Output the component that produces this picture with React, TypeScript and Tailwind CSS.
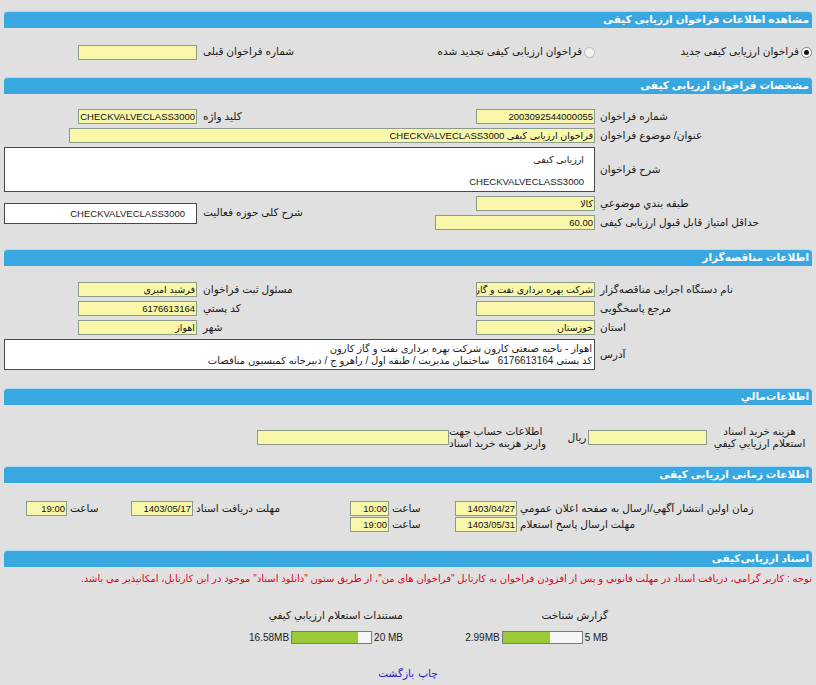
import React from "react";

const Header = ({ title, className = "" }: { title: string; className?: string }) => (
  <div
    className={`mx-[4px] flex h-[17px] items-center rounded-t-[4px] border-t border-[#a9dcf4] bg-[#3aa8e0] px-[3px] text-[10.5px] font-bold text-white ${className}`}
  >
    {title}
  </div>
);

const Field = ({ value = "", className = "" }: { value?: string; className?: string }) => (
  <div
    className={`h-[15px] overflow-hidden whitespace-nowrap border border-[#8c9b88] bg-[#f9f7a9] px-[1px] text-[9.5px] leading-[13px] text-[#111] ${className}`}
  >
    {value}
  </div>
);

const Radio = ({ checked }: { checked?: boolean }) => (
  <span
    className={`inline-flex h-[11px] w-[11px] shrink-0 items-center justify-center rounded-full border ${
      checked ? "border-[#7d7d7d] bg-white" : "border-[#b9b9b9] bg-[#f3f3f3]"
    }`}
  >
    {checked && <span className="h-[5px] w-[5px] rounded-full bg-[#111]" />}
  </span>
);

const Label = ({ text, className = "" }: { text: string; className?: string }) => (
  <div className={`flex items-center justify-end whitespace-nowrap pl-[3px] ${className}`}>{text}</div>
);

const Meter = ({ used, total, max }: { used: number; total: number; max: number }) => {
  const pct = (used / max) * 100;
  return (
    <div className="flex items-center gap-[2px] text-[10px]" dir="ltr">
      <span>{used.toFixed(2)}MB</span>
      <div className="flex h-[13px] w-[81px] border border-[#7b7b7b] bg-[#f6f6f6]">
        <div className="h-full bg-[#9aca38]" style={{ width: `${pct}%` }} />
      </div>
      <span>{total} MB</span>
    </div>
  );
};

export default function App() {
  return (
    <div
      dir="rtl"
      className="h-[685px] w-[816px] overflow-hidden bg-[#e0e0e0] pt-[11px] font-['Liberation_Sans','DejaVu_Sans',sans-serif] text-[10.5px] text-[#1a1a1a]"
    >
      <Header title="مشاهده اطلاعات فراخوان ارزیابی کیفی" />

      {/* نوع فراخوان */}
      <div className="mx-[4px] mt-[16px] grid h-[16px] grid-cols-[215px_297px_100px_196px] items-center">
        <div className="flex items-center gap-[2px]">
          <Radio checked />
          <span>فراخوان ارزیابی کیفی جدید</span>
        </div>
        <div className="flex items-center gap-[2px] pr-[2px]">
          <Radio />
          <span>فراخوان ارزیابی کیفی تجدید شده</span>
        </div>
        <Label text="شماره فراخوان قبلی" />
        <Field className="mr-[3px] w-[119px]" />
      </div>

      <Header title="مشخصات فراخوان ارزیابی کیفی" className="mt-[17px]" />

      <div className="mx-[4px] mt-[15px] grid grid-cols-[215px_297px_100px_196px] grid-rows-[15px_15px_45px_15px_15px] gap-y-[4px]">
        <Label text="شماره فراخوان" />
        <Field value="2003092544000055" className="mr-[2px] w-[119px]" />
        <Label text="کلید واژه" />
        <Field value="CHECKVALVECLASS3000" className="mr-[3px] w-[119px]" />

        <Label text="عنوان/ موضوع فراخوان" />
        <Field value="فراخوان ارزیابی کیفی CHECKVALVECLASS3000" className="col-span-3 mr-[2px] w-[526px]" />

        <Label text="شرح فراخوان" />
        <div className="col-span-3 mr-[2px] border border-[#4a4a4a] bg-white pr-[10px] pt-[6px] text-[9.5px] leading-[11px]">
          <div>ارزیابی کیفی</div>
          <div>&nbsp;</div>
          <div>CHECKVALVECLASS3000</div>
        </div>

        <Label text="طبقه بندي موضوعي" />
        <Field value="کالا" className="mr-[2px] w-[119px]" />
        <Label text="شرح کلی حوزه فعالیت" className="row-span-2" />
        <div className="row-span-2 flex items-center">
          <div className="mr-[3px] h-[21px] flex-1 border border-[#4a4a4a] bg-white pr-[11px] text-[9.5px] leading-[19px]">
            CHECKVALVECLASS3000
          </div>
        </div>

        <Label text="حداقل امتیاز قابل قبول ارزیابی کیفی" />
        <Field value="60.00" className="mr-[2px] w-[160px]" />
      </div>

      <Header title="اطلاعات مناقصه‌گزار" className="mt-[19px]" />

      <div className="mx-[4px] mt-[16px] grid grid-cols-[215px_297px_100px_196px] grid-rows-[15px_15px_15px_31px] gap-y-[4px]">
        <Label text="نام دستگاه اجرایی مناقصه‌گزار" />
        <Field value="شرکت بهره برداری نفت و گاز کارون" className="mr-[2px] w-[119px]" />
        <Label text="مسئول ثبت فراخوان" />
        <Field value="فرشید امیری" className="mr-[3px] w-[119px]" />

        <Label text="مرجع پاسخگویی" />
        <Field className="mr-[2px] w-[119px]" />
        <Label text="کد پستي" />
        <Field value="6176613164" className="mr-[3px] w-[119px]" />

        <Label text="استان" />
        <Field value="خوزستان" className="mr-[2px] w-[119px]" />
        <Label text="شهر" />
        <Field value="اهواز" className="mr-[3px] w-[119px]" />

        <Label text="آدرس" />
        <div className="col-span-3 mr-[2px] border border-[#4a4a4a] bg-white pr-[2px] pt-[3px] text-[10px] leading-[12px]">
          <div>اهواز - ناحیه صنعتی کارون شرکت بهره برداری نفت و گاز کارون</div>
          <div>کد پستی 6176613164 &nbsp; ساختمان مدیریت / طبقه اول / راهرو ج / دبیرخانه کمیسیون مناقصات</div>
        </div>
      </div>

      <Header title="اطلاعات‌مالي" className="mt-[18px]" />

      <div className="mx-[4px] mt-[20px] flex h-[24px] items-center leading-[12px]">
        <div className="w-[105px] text-center">
          <div>هزینه خرید اسناد</div>
          <div>استعلام ارزیابي کیفي</div>
        </div>
        <Field className="w-[119px]" />
        <div className="w-[22px] text-center">ريال</div>
        <div className="w-[117px] text-left">
          <div>اطلاعات حساب جهت</div>
          <div>واریز هزینه خرید اسناد</div>
        </div>
        <Field className="w-[192px]" />
      </div>

      <Header title="اطلاعات زمانی ارزیابی کیفی" className="mt-[17px]" />

      <div className="mx-[4px] mt-[18px] flex flex-col gap-[1px]">
        <div className="flex h-[15px] items-center">
          <Label text="زمان اولین انتشار آگهي/ارسال به صفحه اعلان عمومي" className="w-[295px]" />
          <Field value="1403/04/27" className="w-[62px]" />
          <Label text="ساعت" className="w-[66px]" />
          <Field value="10:00" className="w-[39px]" />
          <Label text="مهلت دریافت اسناد" className="w-[157px]" />
          <Field value="1403/05/17" className="w-[62px]" />
          <Label text="ساعت" className="w-[64px]" />
          <Field value="19:00" className="w-[41px]" />
        </div>
        <div className="flex h-[15px] items-center">
          <Label text="مهلت ارسال پاسخ استعلام" className="w-[295px]" />
          <Field value="1403/05/31" className="w-[62px]" />
          <Label text="ساعت" className="w-[66px]" />
          <Field value="19:00" className="w-[39px]" />
        </div>
      </div>

      <Header title="اسناد ارزیابی‌کیفی" className="mt-[18px]" />

      <div className="mt-[6px] whitespace-nowrap pr-[4px] text-[10px] leading-[12px] text-[#e3001b]">
        توجه : کاربر گرامی، دریافت اسناد در مهلت قانونی و پس از افزودن فراخوان به کارتابل "فراخوان های من"، از طریق ستون "دانلود اسناد" موجود در این کارتابل، امکانپذیر می باشد.
      </div>

      <div className="mt-[24px] flex pr-[208px]">
        <div className="w-[205px]">
          <div className="h-[12px] leading-[12px]">گزارش شناخت</div>
          <div className="mt-[9px] flex">
            <Meter total={5} used={2.99} max={5} />
          </div>
        </div>
        <div className="w-[205px]">
          <div className="h-[12px] leading-[12px]">مستندات استعلام ارزیابي کیفي</div>
          <div className="mt-[9px] flex">
            <Meter total={20} used={16.58} max={20} />
          </div>
        </div>
      </div>

      <div className="mt-[22px] flex justify-center gap-[4px] leading-[13px] text-[#2323c8]">
        <a className="cursor-pointer">چاپ</a>
        <a className="cursor-pointer">بازگشت</a>
      </div>
    </div>
  );
}
